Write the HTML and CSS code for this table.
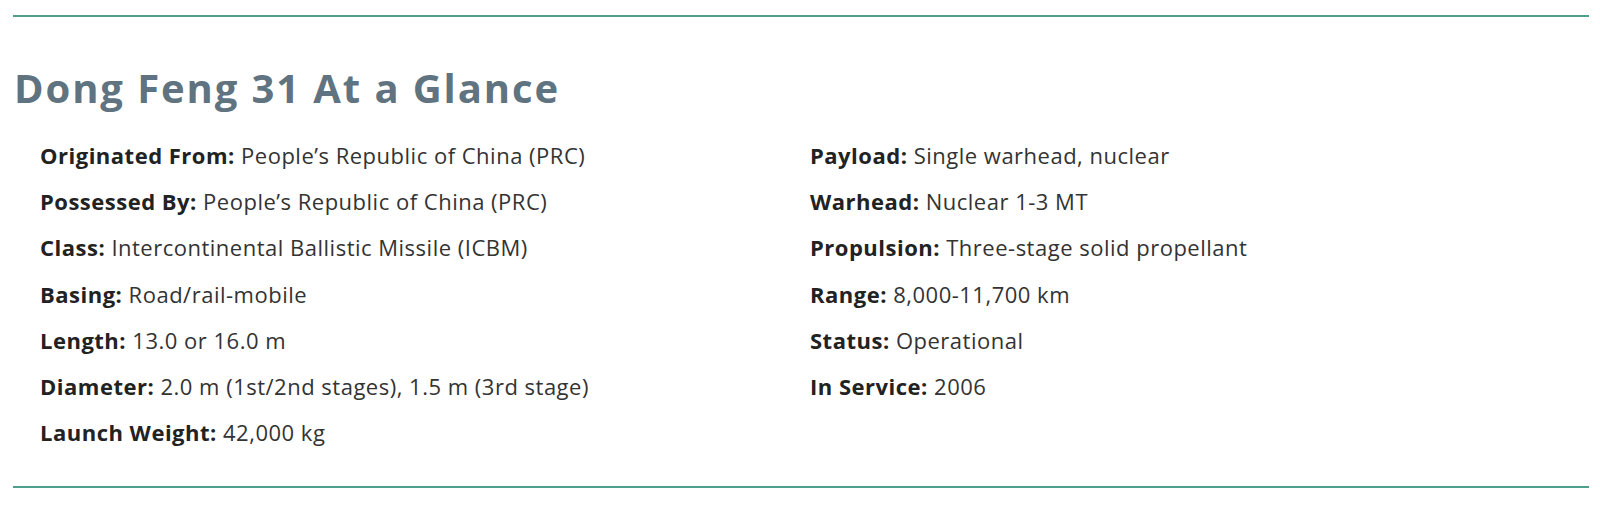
FILE: index.html
```html
<!DOCTYPE html>
<html lang="en">
<head>
<meta charset="utf-8">
<title>Dong Feng 31 At a Glance</title>
<link rel="stylesheet" href="styles.css">
</head>
<body>
<section class="glance">
  <h2 class="glance-title">Dong Feng 31 At a Glance</h2>
  <div class="glance-cols">
    <ul class="glance-list">
      <li><strong>Originated From:</strong> People’s Republic of China (PRC)</li>
      <li><strong>Possessed By:</strong> People’s Republic of China (PRC)</li>
      <li><strong>Class:</strong> Intercontinental Ballistic Missile (ICBM)</li>
      <li><strong>Basing:</strong> Road/rail-mobile</li>
      <li><strong>Length:</strong> 13.0 or 16.0 m</li>
      <li><strong>Diameter:</strong> 2.0 m (1st/2nd stages), 1.5 m (3rd stage)</li>
      <li><strong>Launch Weight:</strong> 42,000 kg</li>
    </ul>
    <ul class="glance-list">
      <li><strong>Payload:</strong> Single warhead, nuclear</li>
      <li><strong>Warhead:</strong> Nuclear 1-3 MT</li>
      <li><strong>Propulsion:</strong> Three-stage solid propellant</li>
      <li><strong>Range:</strong> 8,000-11,700 km</li>
      <li><strong>Status:</strong> Operational</li>
      <li><strong>In Service:</strong> 2006</li>
    </ul>
  </div>
</section>
</body>
</html>
```

FILE: styles.css
```css
html, body {
  margin: 0;
  padding: 0;
  background: #ffffff;
}

.glance {
  margin: 15px 11px 0 13px;
  border-top: 2px solid #4fa08b;
  border-bottom: 2px solid #4fa08b;
  padding: 0 0 41px 0;
}

.glance-title {
  margin: 47px 0 0 0;
  padding-left: 1px;
  font-family: "Open Sans", sans-serif;
  font-weight: 700;
  font-size: 40px;
  line-height: 48px;
  letter-spacing: 1.9px;
  color: #5f7380;
}

.glance-cols {
  display: grid;
  grid-template-columns: 770px 1fr;
  padding-left: 27px;
  margin-top: 30px;
}

.glance-list {
  list-style: none;
  margin: 0;
  padding: 0;
  font-family: "Open Sans", sans-serif;
  font-size: 22px;
  line-height: 26px;
  letter-spacing: 0.5px;
  color: #333333;
}

.glance-list li {
  margin: 0 0 20.2px 0;
}

.glance-list li:last-child {
  margin-bottom: 0;
}

.glance-list strong {
  font-weight: 700;
  color: #222222;
}
```
